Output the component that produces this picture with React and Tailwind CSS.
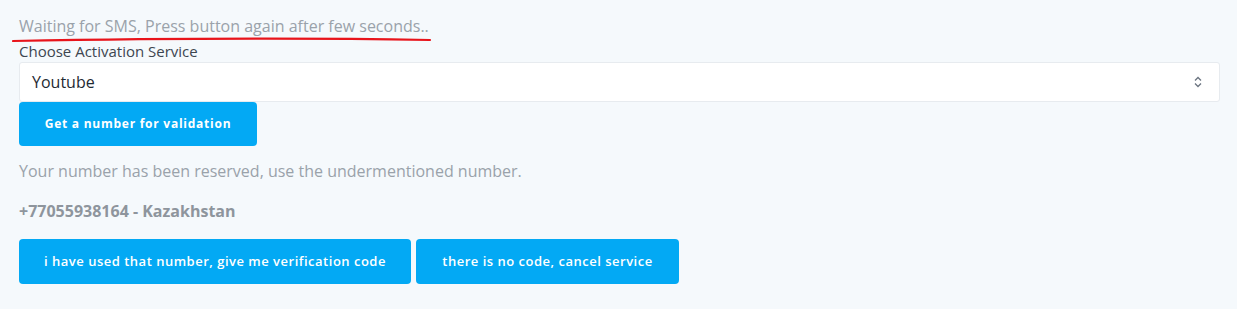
export default function App() {
  return (
    <div
      className="min-h-[309px] w-full bg-[#f5f9fc] px-[19px] pt-[14px]"
      style={{ fontFamily: '"Open Sans", "Noto Sans", sans-serif' }}
    >
      {/* status with hand-drawn underline */}
      <div className="relative">
        <p className="text-[16px] leading-[24px] text-[#9aa2aa]">
          Waiting for SMS, Press button again after few seconds..
        </p>
        <svg
          className="absolute left-[-7px] top-[23px]"
          width="420"
          height="6"
          viewBox="0 0 420 6"
        >
          <path d="M1 4 C 120 2, 300 1, 418 3" stroke="#e8141b" strokeWidth="2.2" fill="none" strokeLinecap="round" />
        </svg>
      </div>

      <label className="mt-[2px] block text-[15px] leading-[22px] text-[#3d4650]">
        Choose Activation Service
      </label>

      <div className="mr-[-2px] flex h-[40px] items-center justify-between rounded-[3px] border border-[#e7ebef] bg-white pl-[12px] pr-[16px]">
        <span className="text-[16px] text-[#1f2a33]">Youtube</span>
        <svg width="10" height="14" viewBox="0 0 10 14" fill="none" stroke="#6b7480" strokeWidth="1.3">
          <path d="M2 5.5 L5 2.5 L8 5.5" />
          <path d="M2 8.5 L5 11.5 L8 8.5" />
        </svg>
      </div>

      <button className="flex h-[44px] w-[238px] items-center justify-center rounded-[4px] bg-[#03a9f4] text-[12px] font-bold tracking-[0.75px] text-white">
        Get a number for validation
      </button>

      <p className="mt-[14px] text-[16px] leading-[22px] text-[#9aa2aa]">
        Your number has been reserved, use the undermentioned number.
      </p>

      <p className="mt-[18px] text-[16px] font-bold leading-[22px] text-[#8e959d]">
        +77055938164 - Kazakhstan
      </p>

      <div className="mt-[17px] flex gap-[5px]">
        <button className="flex h-[45px] w-[392px] items-center justify-center rounded-[4px] bg-[#03a9f4] text-[13px] font-semibold tracking-[0.5px] text-white">
          i have used that number, give me verification code
        </button>
        <button className="flex h-[45px] w-[263px] items-center justify-center rounded-[4px] bg-[#03a9f4] text-[13px] font-semibold tracking-[0.5px] text-white">
          there is no code, cancel service
        </button>
      </div>
    </div>
  )
}
